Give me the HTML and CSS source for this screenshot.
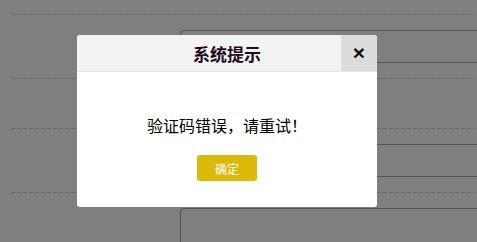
FILE: index.html
```html
<!DOCTYPE html>
<html lang="zh-CN">
<head>
	<meta charset="UTF-8">
	<title>系统提示</title>
	<link rel="stylesheet" href="styles.css">
</head>
<body>
<div class="page">
	<div class="sep sep-first"></div>
	<div class="field"></div>
	<div class="sep"></div>
	<div class="row-empty"></div>
	<div class="sep"></div>
	<div class="field"></div>
	<div class="sep"></div>
	<div class="field field-last"></div>
</div>

<div class="dialog">
	<div class="dialog-header">
		<span class="dialog-title">系统提示</span>
		<button type="button" class="dialog-close">×</button>
	</div>
	<div class="dialog-body">
		<p class="dialog-msg">验证码错误，请重试！</p>
		<button type="button" class="dialog-ok">确定</button>
	</div>
</div>
</body>
</html>
```

FILE: styles.css
```css
html, body {
	margin: 0;
	height: 100%;
	overflow: hidden;
}
body {
	background-color: #7f7f7f; /* page under a 50% overlay */
	font-family: "Noto Sans CJK SC", "Noto Sans", sans-serif;
	position: relative;
}
.page {
	padding: 0 3px 0 11px;
}
.sep {
	height: 1px;
	margin-top: 15px;
	background: repeating-linear-gradient(to right, #666 0 4px, transparent 4px 6px);
}
.sep-first {
	margin-top: 14px;
}
.field {
	margin: 15px -3px 0 169px;
	height: 31px;
	border: 1px solid #555;
	border-right: none;
	border-radius: 4px 0 0 4px;
}
.row-empty {
	height: 34px;
}
.field-last {
	height: 33px;
	border-bottom: none;
	border-radius: 4px 0 0 0;
}

/* dialog */
.dialog {
	position: absolute;
	left: 77px;
	top: 35px;
	width: 300px;
	background-color: #fff;
	border-radius: 3px;
	overflow: hidden;
}
.dialog-header {
	height: 36px;
	background-color: #f3f3f3;
	border-bottom: 1px solid #e6e6e6;
	display: flex;
	align-items: center;
	justify-content: center;
	position: relative;
}
.dialog-title {
	font-size: 17px;
	font-weight: bold;
	color: #1e0c18;
}
.dialog-close {
	position: absolute;
	right: 0;
	top: 0;
	width: 36px;
	height: 36px;
	border: none;
	padding: 0;
	background-color: #dcdcdc;
	color: #111;
	font-family: "Liberation Sans", sans-serif;
	font-size: 21px;
	font-weight: bold;
	line-height: 36px;
	cursor: pointer;
}
.dialog-body {
	padding: 43px 0 26px;
	display: flex;
	flex-direction: column;
	align-items: center;
}
.dialog-msg {
	margin: 0 0 20px 0;
	font-size: 16px;
	line-height: 20px;
	color: #000;
}
.dialog-ok {
	width: 60px;
	height: 26px;
	border: none;
	border-radius: 3px;
	background-color: #dab90a;
	color: #fff;
	font-family: "Noto Sans CJK SC", sans-serif;
	font-size: 12px;
	padding: 0;
	cursor: pointer;
}
```
